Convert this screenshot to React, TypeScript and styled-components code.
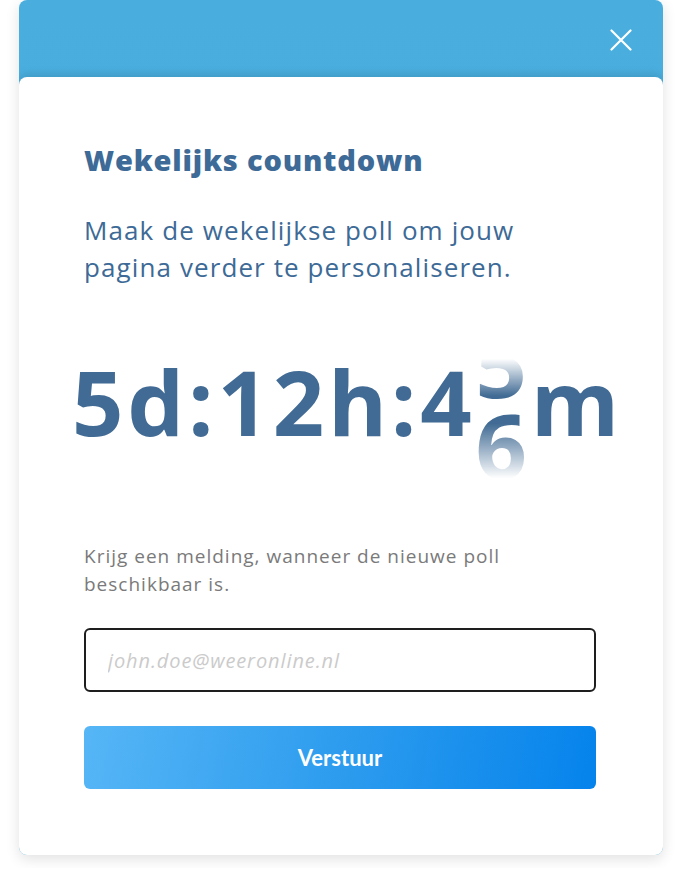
import React from 'react';
import styled, { createGlobalStyle } from 'styled-components';

const GlobalStyle = createGlobalStyle`
  html, body {
    margin: 0;
    padding: 0;
    background: #fff;
    font-family: 'Open Sans', Lato, sans-serif;
  }
  * {
    box-sizing: border-box;
  }
`;

const App: React.FC = () => {
  return (
    <Page>
      <GlobalStyle />
      <Card>
        <Header>
          <CloseButton aria-label='sluiten'>
            <svg width='22' height='22' viewBox='0 0 22 22' fill='none'>
              <path d='M1.5 1.5L20.5 20.5M20.5 1.5L1.5 20.5' stroke='#fff' strokeWidth='2.2' strokeLinecap='round' />
            </svg>
          </CloseButton>
        </Header>
        <Body>
          <Title>Wekelijks countdown</Title>
          <Lead>
            Maak de wekelijkse poll om jouw
            <br />
            pagina verder te personaliseren.
          </Lead>
          <Countdown>
            5d:12h:4
            <Reel>
              <Strip>
                <Digit>5</Digit>
                <Digit>6</Digit>
              </Strip>
            </Reel>
            m
          </Countdown>
          <Note>
            Krijg een melding, wanneer de nieuwe poll
            <br />
            beschikbaar is.
          </Note>
          <EmailInput type='email' placeholder='john.doe@weeronline.nl' aria-label='email' />
          <SubmitButton type='button'>Verstuur</SubmitButton>
        </Body>
      </Card>
    </Page>
  );
};

export default App;

// --- Styled Components ---
const Page = styled.div`
  width: 682px;
  padding: 0 19px 13px;
`;

const Card = styled.div`
  display: flex;
  flex-direction: column;
  border-radius: 8px;
  overflow: hidden;
  background: linear-gradient(180deg, #49aede 0%, #4cb1e1 70%, #3f9fcf 100%);
  box-shadow: 0 4px 14px rgba(0, 0, 0, 0.12);
`;

const Header = styled.div`
  height: 77px;
  display: flex;
  align-items: center;
  justify-content: flex-end;
  padding-right: 31px;
`;

const CloseButton = styled.button`
  display: flex;
  padding: 0;
  border: none;
  background: none;
  cursor: pointer;
  margin-top: 3px;
`;

const Body = styled.div`
  display: flex;
  flex-direction: column;
  background: #fff;
  border-radius: 8px 8px 0 0;
  box-shadow: 0 -3px 8px rgba(0, 0, 0, 0.12);
  padding: 66px 67px 66px 65px;
`;

const Title = styled.h1`
  margin: 0;
  font-family: 'Open Sans', sans-serif;
  font-size: 29px;
  line-height: 34px;
  font-weight: 800;
  letter-spacing: 0.8px;
  color: #3d6a96;
`;

const Lead = styled.p`
  margin: 35px 0 0;
  font-family: 'Open Sans', sans-serif;
  font-size: 26px;
  line-height: 37px;
  font-weight: 400;
  letter-spacing: 1.1px;
  color: #3d6a96;
`;

const Countdown = styled.div`
  margin: 70px 0 0 -12px;
  font-family: 'Open Sans', sans-serif;
  font-size: 90px;
  line-height: 90px;
  font-weight: 700;
  letter-spacing: 0.042em;
  color: #416b94;
  white-space: nowrap;
`;

const Reel = styled.span`
  display: inline-block;
  vertical-align: top;
  height: 90px;
`;

const Strip = styled.span`
  display: flex;
  flex-direction: column;
  transform: translateY(-33px);
  -webkit-mask-image: linear-gradient(180deg, transparent 22%, #000 45%, #000 62%, transparent 96%);
  mask-image: linear-gradient(180deg, transparent 22%, #000 45%, #000 62%, transparent 96%);
`;

const Digit = styled.span`
  display: block;
  height: 81px;
  line-height: 81px;
`;

const Note = styled.p`
  margin: 96px 0 0;
  font-family: 'Open Sans', sans-serif;
  font-size: 19px;
  line-height: 28px;
  letter-spacing: 1px;
  color: #7a7a7a;
`;

const EmailInput = styled.input`
  margin-top: 30px;
  height: 64px;
  width: 100%;
  padding: 0 22px;
  border: 2px solid #1e1e1e;
  border-radius: 6px;
  font-family: 'Open Sans', sans-serif;
  font-size: 20px;
  font-style: italic;
  letter-spacing: 0.9px;
  color: #333;
  background: #fff;
  &::placeholder {
    color: #cbcbcb;
    letter-spacing: 0.9px;
  }
  &:focus {
    outline: none;
  }
`;

const SubmitButton = styled.button`
  margin-top: 34px;
  height: 63px;
  width: 100%;
  border: none;
  border-radius: 6px;
  background: linear-gradient(100deg, #56b6f6 0%, #2d9cee 50%, #0583ec 100%);
  color: #fff;
  font-family: Lato, sans-serif;
  font-size: 22px;
  font-weight: 700;
  cursor: pointer;
`;
